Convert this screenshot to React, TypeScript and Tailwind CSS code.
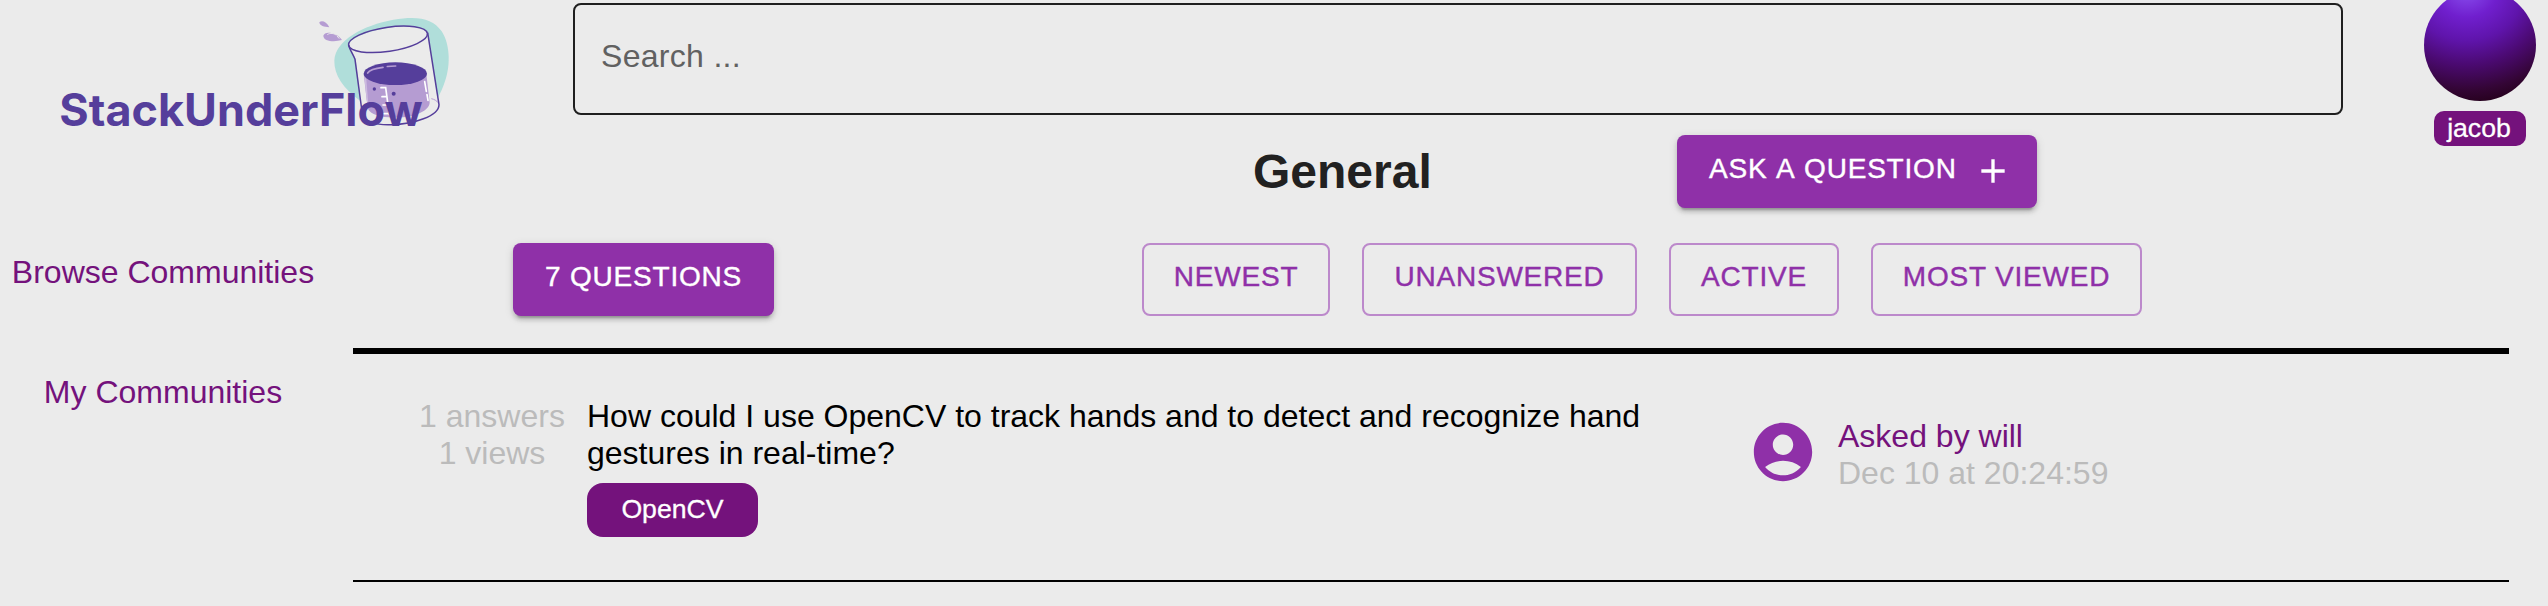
import type { ReactNode } from "react";
import { MdAccountCircle, MdAdd } from "react-icons/md";

function Logo() {
  return (
    <svg className="block h-[150px] w-[480px] shrink-0" viewBox="0 0 1440 450" role="img" aria-label="StackUnderFlow">
      <g transform="translate(900 0)">
        <path d="M103 182C106 120 190 76 280 59C352 47 398 54 425 94C452 135 453 205 430 258C422 277 416 290 410 300L180 302C130 265 102 225 103 182Z" fill="#b0deda" />
        <path d="M146 135L167 178L187 342C192 364 225 376 275 374C340 373 412 348 416 316L383 98C376 80 310 70 220 93C175 105 148 120 146 135Z" fill="#ebebeb" />
        <path d="M191 222L203 325C212 348 255 355 300 352C350 350 388 330 389 308L379 222Z" fill="#b59cd2" />
        <path d="M192 222L200 300L206 325L199 238Z" fill="#cdbbe0" />
        <ellipse cx="286" cy="221" rx="95" ry="34" fill="#553e9b" />
        <path d="M203 219C209 209 225 205 249 202M262 199.500C270 198 278 198 287 198" fill="none" stroke="#b59cd2" strokeWidth="5" strokeLinecap="round" />
        <path d="M243 263L257 263L268 344M246 290L260 290M249 315L263 315M252 341L267 341M374 245L379 274M381 284L384 301" fill="none" stroke="#fff" strokeWidth="5" strokeLinecap="round" />
        <circle cx="223" cy="267" r="5" fill="#553e9b" />
        <circle cx="281" cy="281" r="6" fill="#553e9b" />
        <path d="M394 296C403 298 410 302 414 308" fill="none" stroke="#b59cd2" strokeWidth="3" />
        <g fill="none" stroke="#553e9b" strokeWidth="4.500" strokeLinejoin="round">
          <ellipse cx="264" cy="118" rx="119.500" ry="36" transform="rotate(-8.500 264 118)" />
          <path d="M146 135C147 146 158 160 165 178L187 342C191 364 225 376 275 374C340 373 417 348 417 314L383 98" />
        </g>
        <path d="M58 67C64 60 79 63 88 82C72 81 59 77 58 67Z" fill="#b59cd2" />
        <path d="M70 107C74 92 108 96 126 120C102 127 70 124 70 107Z" fill="#b59cd2" />
        <path d="M83 103C91 98 102 100 108 105M112 109L117 115" fill="none" stroke="#ebebeb" strokeWidth="3" strokeLinecap="round" />
      </g>
      <text x="178" y="377" fontSize="134" fontWeight="700" textLength="1090" lengthAdjust="spacingAndGlyphs" fill="#553e9b" className="font-[Inter,sans-serif]">
        StackUnderFlow
      </text>
    </svg>
  );
}

const buttonBase =
  "flex h-[73px] shrink-0 rounded-[8px] text-[28px] leading-[49px] tracking-[0.8px] uppercase whitespace-nowrap [-webkit-text-stroke:0.4px_currentColor]";

function Contained({ className, children }: { className: string; children: ReactNode }) {
  return (
    <button
      className={`${buttonBase} bg-[#8f30a8] pt-[9px] text-white shadow-[0_6px_2px_-4px_rgba(0,0,0,0.2),0_4px_4px_0_rgba(0,0,0,0.14),0_2px_10px_0_rgba(0,0,0,0.12)] ${className}`}
    >
      {children}
    </button>
  );
}

function Outlined({ className, children }: { className: string; children: ReactNode }) {
  return (
    <button className={`${buttonBase} justify-center border-2 border-[#bc89cb] pt-[7px] text-[#8f30a8] ${className}`}>
      {children}
    </button>
  );
}

export default function App() {
  return (
    <div className="h-[606px] w-[2548px] overflow-hidden bg-[#ebebeb] font-['Liberation_Sans',Arial,sans-serif] text-[32px] leading-[37px] text-black">
      <header className="flex h-[135px] items-start">
        <div className="w-[573px] shrink-0">
          <Logo />
        </div>
        <div className="mt-[3px] flex h-[112px] w-[1770px] shrink-0 rounded-[8px] border-2 border-[#1f1f1f] pt-[33px] pl-[26px]">
          <input
            className="h-[37px] w-full bg-transparent tracking-[0.3px] outline-none placeholder:text-[#616161] placeholder:opacity-100"
            placeholder="Search ..."
          />
        </div>
        <div className="ml-[81px] flex w-[112px] shrink-0 flex-col items-center">
          <div className="-mt-[11px] size-[112px] shrink-0 rounded-full bg-[radial-gradient(ellipse_115%_105%_at_38%_0%,#8a50f0_0%,#701fce_24%,#5f14ab_44%,#4b0a72_64%,#330534_86%,#230018_100%)]" />
          <div className="mt-[10px] h-[35px] w-[92px] rounded-[10px] bg-[#74127c] pr-[2px] text-center text-[26.67px] leading-[35px] text-white [-webkit-text-stroke:0.3px_currentColor]">
            jacob
          </div>
        </div>
      </header>

      <div className="flex">
        <nav className="flex w-[353px] shrink-0 flex-col gap-[83px] pt-[119px] text-[#74127c]">
          <a className="w-[326px] text-center">Browse Communities</a>
          <a className="w-[326px] text-center">My Communities</a>
        </nav>

        <main className="w-[2156px] shrink-0">
          <div className="flex h-[108px] items-start pl-[900px]">
            <h1 className="w-[424px] pt-[9px] text-[48px] leading-[56px] font-bold text-[#212121]">General</h1>
            <Contained className="w-[360px] justify-between pr-[24px] pl-[32px]">
              <span className="[font-kerning:none]">Ask a question</span>
              <MdAdd className="mt-[7px] size-[40px] [stroke-width:0]" />
            </Contained>
          </div>

          <div className="flex h-[105px] items-start pl-[160px]">
            <Contained className="mr-[368px] w-[261px] justify-center">7 Questions</Contained>
            <div className="flex gap-[32px]">
              <Outlined className="w-[188px]">Newest</Outlined>
              <Outlined className="w-[275px]">Unanswered</Outlined>
              <Outlined className="w-[170px]">Active</Outlined>
              <Outlined className="w-[271px]">Most viewed</Outlined>
            </div>
          </div>

          <article className="flex h-[234px] items-start border-t-[6px] border-b-2 border-black">
            <div className="ml-[60px] w-[158px] shrink-0 pt-[44px] text-center text-[#bbbbbb]">
              <p>1 answers</p>
              <p>1 views</p>
            </div>
            <div className="ml-[16px] w-[1100px] shrink-0 pt-[44px]">
              <p>How could I use OpenCV to track hands and to detect and recognize hand gestures in real-time?</p>
              <div className="mt-[11px] h-[54px] w-[171px] rounded-[16px] bg-[#74127c] text-center text-[26.67px] leading-[53px] text-white [-webkit-text-stroke:0.3px_currentColor]">
                OpenCV
              </div>
            </div>
            <MdAccountCircle className="mt-[63px] ml-[61px] size-[70px] shrink-0 text-[#8f30a8]" />
            <div className="ml-[20px] pt-[64px] whitespace-nowrap">
              <p className="text-[#74127c]">Asked by will</p>
              <p className="text-[#bbbbbb]">Dec 10 at 20:24:59</p>
            </div>
          </article>
        </main>
      </div>
    </div>
  );
}
